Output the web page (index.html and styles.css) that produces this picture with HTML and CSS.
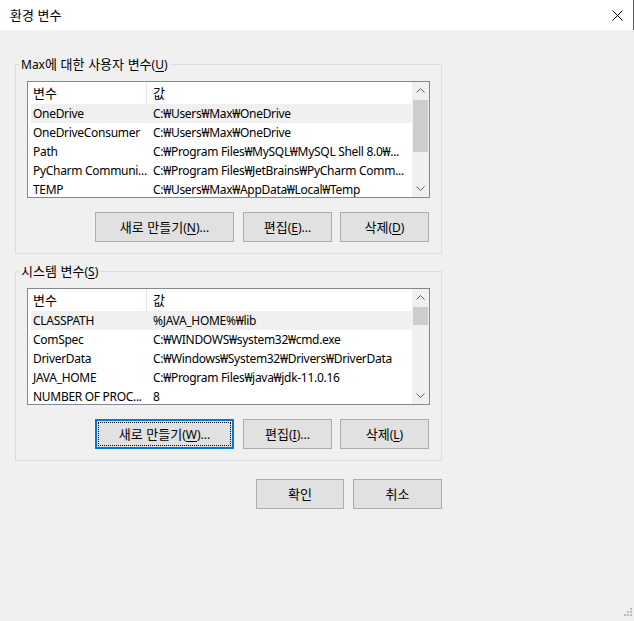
FILE: index.html
```html
<!DOCTYPE html>
<html lang="ko">
<head>
<meta charset="utf-8">
<title>환경 변수</title>
<link rel="stylesheet" href="styles.css">
</head>
<body>
<div class="titlebar">
  <span class="title"><span class="ko">환경 변수</span></span>
  <svg class="close" width="11" height="11" viewBox="0 0 11 11"><path d="M0.5 0.5 L10.5 10.5 M10.5 0.5 L0.5 10.5" stroke="#000" stroke-width="1" fill="none"/></svg>
</div>
<div class="main">
  <fieldset class="group">
    <legend>Max<span class="ko">에 대한 사용자 변수</span>(<u>U</u>)</legend>
    <div class="list">
      <div class="list-body">
        <div class="row header"><span class="c1"><span class="ko">변수</span></span><span class="c2"><span class="ko">값</span></span></div>
        <div class="row selected"><span class="c1">OneDrive</span><span class="c2">C:₩Users₩Max₩OneDrive</span></div>
        <div class="row"><span class="c1">OneDriveConsumer</span><span class="c2">C:₩Users₩Max₩OneDrive</span></div>
        <div class="row"><span class="c1">Path</span><span class="c2">C:₩Program Files₩MySQL₩MySQL Shell 8.0₩...</span></div>
        <div class="row"><span class="c1">PyCharm Communi...</span><span class="c2">C:₩Program Files₩JetBrains₩PyCharm Comm...</span></div>
        <div class="row"><span class="c1">TEMP</span><span class="c2">C:₩Users₩Max₩AppData₩Local₩Temp</span></div>
      </div>
      <div class="scrollbar">
        <div class="arrow"><svg width="9" height="5" viewBox="0 0 9 5"><path d="M0.5 4.5 L4.5 0.5 L8.5 4.5" stroke="#606060" fill="none"/></svg></div>
        <div class="thumb thumb-long"></div>
        <div class="track"></div>
        <div class="arrow"><svg width="9" height="5" viewBox="0 0 9 5"><path d="M0.5 0.5 L4.5 4.5 L8.5 0.5" stroke="#606060" fill="none"/></svg></div>
      </div>
    </div>
    <div class="buttons">
      <button class="btn wide"><span class="ko">새로 만들기</span>(<u>N</u>)...</button>
      <button class="btn"><span class="ko">편집</span>(<u>E</u>)...</button>
      <button class="btn"><span class="ko">삭제</span>(<u>D</u>)</button>
    </div>
  </fieldset>

  <fieldset class="group group2">
    <legend><span class="ko">시스템 변수</span>(<u>S</u>)</legend>
    <div class="list">
      <div class="list-body">
        <div class="row header"><span class="c1"><span class="ko">변수</span></span><span class="c2"><span class="ko">값</span></span></div>
        <div class="row selected"><span class="c1">CLASSPATH</span><span class="c2">%JAVA_HOME%₩lib</span></div>
        <div class="row"><span class="c1">ComSpec</span><span class="c2">C:₩WINDOWS₩system32₩cmd.exe</span></div>
        <div class="row"><span class="c1">DriverData</span><span class="c2">C:₩Windows₩System32₩Drivers₩DriverData</span></div>
        <div class="row"><span class="c1">JAVA_HOME</span><span class="c2">C:₩Program Files₩java₩jdk-11.0.16</span></div>
        <div class="row"><span class="c1">NUMBER OF PROC...</span><span class="c2">8</span></div>
      </div>
      <div class="scrollbar">
        <div class="arrow"><svg width="9" height="5" viewBox="0 0 9 5"><path d="M0.5 4.5 L4.5 0.5 L8.5 4.5" stroke="#606060" fill="none"/></svg></div>
        <div class="thumb thumb-short"></div>
        <div class="track"></div>
        <div class="arrow"><svg width="9" height="5" viewBox="0 0 9 5"><path d="M0.5 0.5 L4.5 4.5 L8.5 0.5" stroke="#606060" fill="none"/></svg></div>
      </div>
    </div>
    <div class="buttons">
      <button class="btn wide focused"><span class="ko">새로 만들기</span>(<u>W</u>)...</button>
      <button class="btn"><span class="ko">편집</span>(<u>I</u>)...</button>
      <button class="btn"><span class="ko">삭제</span>(<u>L</u>)</button>
    </div>
  </fieldset>

  <div class="dialog-buttons">
    <button class="btn ok"><span class="ko">확인</span></button>
    <button class="btn"><span class="ko">취소</span></button>
  </div>
</div>
<svg class="grip" width="12" height="12" viewBox="0 0 12 12">
  <rect x="9" y="0" width="2" height="2" fill="#bcbcbc"/>
  <rect x="6" y="3" width="2" height="2" fill="#bcbcbc"/>
  <rect x="9" y="3" width="2" height="2" fill="#bcbcbc"/>
  <rect x="3" y="6" width="2" height="2" fill="#bcbcbc"/>
  <rect x="6" y="6" width="2" height="2" fill="#bcbcbc"/>
  <rect x="9" y="6" width="2" height="2" fill="#bcbcbc"/>
</svg>
</body>
</html>
```
FILE: styles.css
```css
html, body {
  margin: 0;
  padding: 0;
}
body {
  width: 634px;
  height: 621px;
  overflow: hidden;
  background: #f0f0f0;
  font-family: "Noto Sans", "Noto Sans CJK KR", sans-serif;
  font-size: 12px;
  color: #000;
  display: flex;
  flex-direction: column;
}
.ko {
  font-family: "Noto Sans CJK KR", sans-serif;
  font-size: 13px;
  letter-spacing: 0;
}
.titlebar {
  height: 30px;
  flex: none;
  background: #fff;
  box-sizing: border-box;
  border-right: 1px solid #595959;
  display: flex;
  align-items: center;
  justify-content: space-between;
  padding: 0 10px 0 10px;
}
.title {
  font-size: 12px;
  line-height: 16px;
}
.close {
  display: block;
}
.main {
  display: flex;
  flex-direction: column;
  padding-left: 15px;
}
.group {
  margin: 26px 0 0 0;
  width: 427px;
  box-sizing: border-box;
  border: 1px solid #dcdcdc;
  padding: 0 11px 11px 11px;
  min-width: 0;
}
.group2 {
  margin-top: 9px;
}
.group legend {
  padding: 0 2px;
  margin-left: -8px;
  line-height: 16px;
  height: 16px;
}
u {
  text-decoration: underline;
  text-underline-offset: 2px;
}
.list {
  margin-top: 9px;
  height: 117px;
  box-sizing: border-box;
  border: 1px solid #828790;
  background: #fff;
  display: flex;
  overflow: hidden;
}
.list-body {
  flex: 1;
  padding-left: 3px;
  overflow: hidden;
  min-width: 0;
}
.row {
  display: grid;
  grid-template-columns: 116px 1fr;
  height: 19px;
  line-height: 19px;
  white-space: nowrap;
  letter-spacing: -0.3px;
}
.row.header {
  height: 22px;
  line-height: 21px;
}
.row.selected {
  background: #f0f0f0;
}
.c1 {
  padding-left: 2px;
  overflow: hidden;
  box-sizing: border-box;
}
.header .c1 {
  border-right: 1px solid #e5e5e5;
}
.c2 {
  padding-left: 6px;
  overflow: hidden;
}
.scrollbar {
  width: 17px;
  flex: none;
  background: #f0f0f0;
  display: flex;
  flex-direction: column;
}
.arrow {
  height: 17px;
  flex: none;
  display: flex;
  align-items: center;
  justify-content: center;
}
.arrow svg {
  display: block;
}
.thumb {
  margin: 1px 1px 0 1px;
  background: #cdcdcd;
  flex: none;
}
.thumb-long {
  height: 52px;
}
.thumb-short {
  height: 18px;
}
.track {
  flex: 1;
}
.buttons {
  margin-top: 14px;
  display: flex;
  justify-content: flex-end;
  padding-right: 1px;
}
.btn {
  height: 30px;
  width: 89px;
  box-sizing: border-box;
  background: #e1e1e1;
  border: 1px solid #adadad;
  border-radius: 0;
  font-family: "Noto Sans", "Noto Sans CJK KR", sans-serif;
  font-size: 12px;
  color: #000;
  padding: 0;
  margin: 0;
  line-height: 16px;
}
.buttons .btn + .btn {
  margin-left: 8px;
}
.buttons .btn.wide {
  width: 139px;
  margin-right: 1px;
}
.btn.focused {
  border-color: #0078d7;
  box-shadow: inset 0 0 0 1px #0078d7;
  outline: 1px dotted #000;
  outline-offset: -4px;
}
.dialog-buttons {
  margin-top: 18px;
  width: 427px;
  display: flex;
  justify-content: flex-end;
}
.dialog-buttons .btn.ok {
  width: 88px;
  margin-right: 9px;
}
.grip {
  display: block;
  margin-top: auto;
  align-self: flex-end;
  margin-right: 1px;
  margin-bottom: 1px;
}
```
